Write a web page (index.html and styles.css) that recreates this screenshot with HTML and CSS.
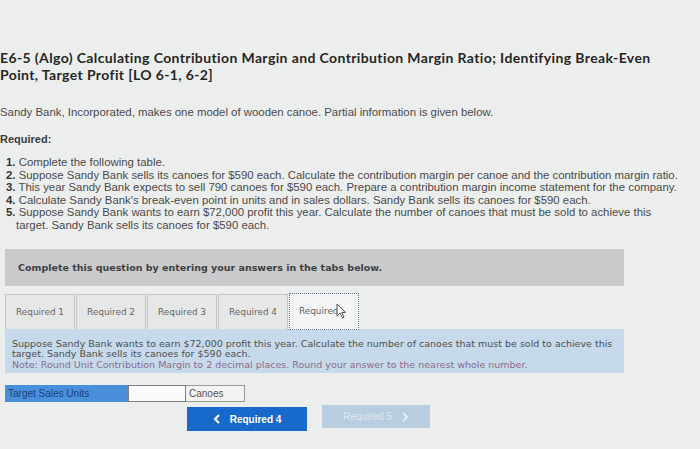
FILE: index.html
```html
<!DOCTYPE html>
<html>
<head>
<meta charset="utf-8">
<link rel="stylesheet" href="styles.css">
</head>
<body>
<div class="page">
  <h1 class="title">E6-5 (Algo) Calculating Contribution Margin and Contribution Margin Ratio; Identifying <span class="nowrap">Break-Even</span> Point, Target Profit [LO 6-1, 6-2]</h1>
  <p class="intro">Sandy Bank, Incorporated, makes one model of wooden canoe. Partial information is given below.</p>
  <p class="req-label">Required:</p>
  <ol class="req-list">
    <li><b>1.</b> Complete the following table.</li>
    <li><b>2.</b> Suppose Sandy Bank sells its canoes for $590 each. Calculate the contribution margin per canoe and the contribution margin ratio.</li>
    <li><b>3.</b> This year Sandy Bank expects to sell 790 canoes for $590 each. Prepare a contribution margin income statement for the company.</li>
    <li><b>4.</b> Calculate Sandy Bank's break-even point in units and in sales dollars. Sandy Bank sells its canoes for $590 each.</li>
    <li><b>5.</b> Suppose Sandy Bank wants to earn $72,000 profit this year. Calculate the number of canoes that must be sold to achieve this<br><span class="indent">target. Sandy Bank sells its canoes for $590 each.</span></li>
  </ol>

  <div class="question">
    <div class="banner">Complete this question by entering your answers in the tabs below.</div>
    <div class="tabs">
      <div class="tab">Required 1</div>
      <div class="tab">Required 2</div>
      <div class="tab">Required 3</div>
      <div class="tab">Required 4</div>
      <div class="tab active">Required
        <svg class="cursor" width="11" height="16" viewBox="0 0 11 16"><path d="M1 1 L1 13 L4 10 L6.5 15 L8 14.3 L5.6 9.4 L9.6 9.4 Z" fill="#fff" stroke="#555" stroke-width="1"/></svg>
      </div>
    </div>
    <div class="panel">
      <p>Suppose Sandy Bank wants to earn $72,000 profit this year. Calculate the number of canoes that must be sold to achieve this target. Sandy Bank sells its canoes for $590 each.</p>
      <p class="note">Note: Round Unit Contribution Margin to 2 decimal places. Round your answer to the nearest whole number.</p>
    </div>
    <div class="answer-row">
      <div class="label-cell">Target Sales Units</div>
      <div class="input-cell"></div>
      <div class="unit-cell">Canoes</div>
    </div>
    <div class="nav">
      <div class="btn prev">
        <svg width="8" height="10" viewBox="0 0 8 10"><path d="M6 1 L2 5 L6 9" fill="none" stroke="#fff" stroke-width="2.2"/></svg>
        <span>Required 4</span>
      </div>
      <div class="btn next">
        <span>Required 5</span>
        <svg width="8" height="10" viewBox="0 0 8 10"><path d="M2 1 L6 5 L2 9" fill="none" stroke="#e3ecf5" stroke-width="1.8"/></svg>
      </div>
    </div>
  </div>
</div>
</body>
</html>
```

FILE: styles.css
```css
* { box-sizing: border-box; }
html, body {
  margin: 0;
  padding: 0;
  background: #eceeed;
}
.page {
  width: 700px;
  height: 449px;
  padding-top: 49px;
  overflow: hidden;
  font-family: "Liberation Sans", Arial, sans-serif;
  color: #444;
}
.title {
  margin: 0;
  font-family: Lato, "DejaVu Sans", sans-serif;
  font-weight: 700;
  font-size: 14px;
  letter-spacing: 0.38px;
  line-height: 17px;
  color: #262626;
  width: 664px;
}
.nowrap { white-space: nowrap; }
.intro {
  margin: 23px 0 0 0;
  font-size: 11.4px;
  line-height: 13px;
  color: #4a4a4a;
}
.req-label {
  margin: 14px 0 0 0;
  font-size: 11px;
  line-height: 13px;
  font-weight: 700;
  color: #3a3a3a;
}
.req-list {
  list-style: none;
  margin: 10px 0 0 0;
  padding: 0 0 0 6px;
  font-size: 11.4px;
  line-height: 12.6px;
  color: #4a4a4a;
  white-space: nowrap;
}
.req-list b { color: #333; }
.indent { padding-left: 10px; }

.question {
  margin-top: 17px;
  padding-left: 5px;
  width: 624px;
}
.banner {
  height: 37px;
  background: #c9cacb;
  font-family: "DejaVu Sans", Verdana, sans-serif;
  font-weight: 700;
  font-size: 9.5px;
  color: #3f3f3f;
  display: flex;
  align-items: center;
  padding-left: 13px;
}
.tabs {
  display: flex;
  margin-top: 8px;
  height: 35px;
  gap: 1px;
}
.tab {
  position: relative;
  width: 70px;
  height: 35px;
  background: #e6e7e7;
  border: 1px solid #c4c4c4;
  border-bottom: none;
  display: flex;
  align-items: center;
  justify-content: center;
  font-family: "DejaVu Sans", Verdana, sans-serif;
  font-size: 8.9px;
  color: #666;
}
.tab.active {
  background: #f4f5f5;
  border: 1.5px dotted #6a6f8a;
  height: 37px;
  margin-top: -1px;
  width: 70px;
  justify-content: flex-start;
  padding-left: 9px;
}
.cursor {
  position: absolute;
  left: 46px;
  top: 9px;
}
.panel {
  background: #c6daeb;
  padding: 10px 0 3px 7px;
  font-family: "DejaVu Sans", Verdana, sans-serif;
  font-size: 9.5px;
  line-height: 10.5px;
  color: #4f4f4f;
}
.panel p { margin: 0; }
.panel .note { color: #8d6a8a; }
.answer-row {
  display: flex;
  margin-top: 12px;
  height: 17px;
}
.label-cell {
  width: 123px;
  background: #4a8fdb;
  color: #1e3f7a;
  font-size: 10px;
  display: flex;
  align-items: center;
  padding-left: 3px;
}
.input-cell {
  width: 58px;
  background: #fafafa;
  border: 1px solid #7a7f8a;
}
.unit-cell {
  width: 59px;
  background: #f3f3f3;
  border: 1px solid #9a9a9a;
  border-left: none;
  font-size: 10px;
  color: #555;
  display: flex;
  align-items: center;
  padding-left: 3px;
}
.nav {
  display: flex;
  margin-top: 5px;
  padding-left: 182px;
  gap: 15px;
}
.btn {
  height: 24px;
  display: flex;
  align-items: center;
  justify-content: center;
  gap: 9px;
  font-size: 10px;
  font-weight: 700;
}
.btn.prev {
  width: 120px;
  background: #1769cc;
  color: #fff;
}
.btn.next {
  width: 108px;
  height: 23px;
  margin-top: -2px;
  background: #b9cde0;
  color: #dce6f0;
  font-weight: 400;
}
```
